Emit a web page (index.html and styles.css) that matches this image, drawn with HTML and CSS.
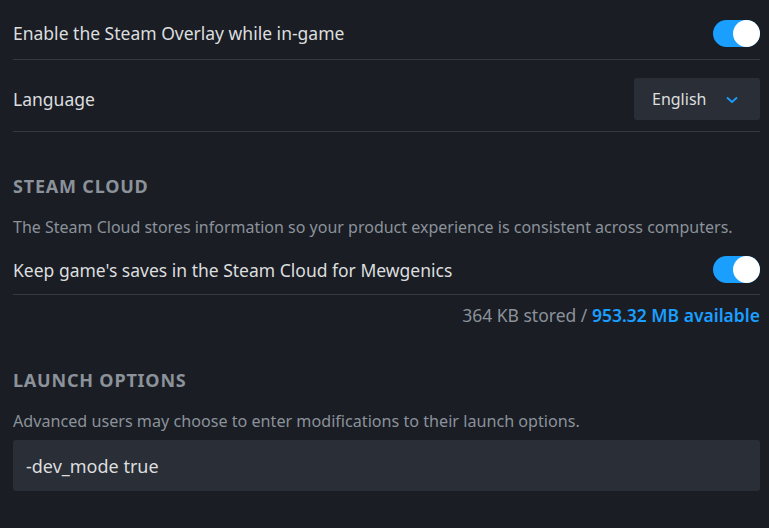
FILE: index.html
```html
<!DOCTYPE html>
<html>
<head>
<meta charset="utf-8">
<link rel="stylesheet" href="styles.css">
</head>
<body>
<div class="page">
  <div class="row row-first">
    <span class="label">Enable the Steam Overlay while in-game</span>
    <span class="toggle"><span class="knob"></span></span>
  </div>
  <div class="row row-lang">
    <span class="label">Language</span>
    <div class="dropdown">
      <span>English</span>
      <svg class="chev" width="12" height="8" viewBox="0 0 12 8"><path d="M1 1.5 L6 6 L11 1.5" fill="none" stroke="#1a9fff" stroke-width="1.8"/></svg>
    </div>
  </div>

  <h2 class="section-title title-cloud">Steam Cloud</h2>
  <p class="desc desc-cloud">The Steam Cloud stores information so your product experience is consistent across computers.</p>
  <div class="row row-keep">
    <span class="label">Keep game's saves in the Steam Cloud for Mewgenics</span>
    <span class="toggle"><span class="knob"></span></span>
  </div>
  <div class="stored">364 KB stored / <span class="avail">953.32 MB available</span></div>

  <h2 class="section-title title-launch">Launch Options</h2>
  <p class="desc desc-launch">Advanced users may choose to enter modifications to their launch options.</p>
  <div class="input">-dev_mode true</div>
</div>
</body>
</html>
```
FILE: styles.css
```css
* { box-sizing: border-box; }
html, body {
  margin: 0;
  padding: 0;
  background: #1a1d24;
  height: 100%;
}
body {
  font-family: "Noto Sans", "Open Sans", sans-serif;
  color: #dcdedf;
}
.page {
  padding: 7px 9px 0 13px;
}
.row {
  display: flex;
  align-items: center;
  justify-content: space-between;
  border-bottom: 1px solid #343941;
}
.label {
  font-size: 17.5px;
  color: #dcdedf;
}
.row-first { height: 53px; }
.row-lang { padding: 18px 0 11px; }
.row-keep { margin-top: 6px; height: 50px; }
.toggle {
  width: 47px;
  height: 27px;
  border-radius: 14px;
  background: #1a9fff;
  display: flex;
  justify-content: flex-end;
}
.knob {
  width: 27px;
  height: 27px;
  border-radius: 50%;
  background: #ffffff;
}
.dropdown {
  width: 126px;
  height: 42px;
  background: #2a2e36;
  border-radius: 3px;
  display: flex;
  align-items: center;
  padding: 0 22px 0 18px;
  justify-content: space-between;
  font-size: 16px;
  color: #dcdedf;
}
.chev { margin-top: 2px; }
.section-title {
  margin: 0;
  font-size: 18px;
  line-height: 24px;
  font-weight: 700;
  text-transform: uppercase;
  letter-spacing: 0.8px;
  color: #8b929a;
}
.title-cloud { margin-top: 42px; }
.title-launch { margin-top: 41px; }
.desc {
  margin: 17px 0 0;
  font-size: 16px;
  line-height: 24px;
  color: #8b929a;
}
.desc-launch { font-size: 16.15px; }
.stored {
  margin-top: 8px;
  text-align: right;
  font-size: 17.5px;
  line-height: 24px;
  color: #8b929a;
}
.avail {
  color: #1a9fff;
  font-weight: 600;
}
.input {
  margin-top: 7px;
  height: 51px;
  background: #2a2e36;
  border-radius: 3px;
  display: flex;
  align-items: center;
  padding-left: 13px;
  font-size: 18px;
  color: #dcdedf;
}
```
